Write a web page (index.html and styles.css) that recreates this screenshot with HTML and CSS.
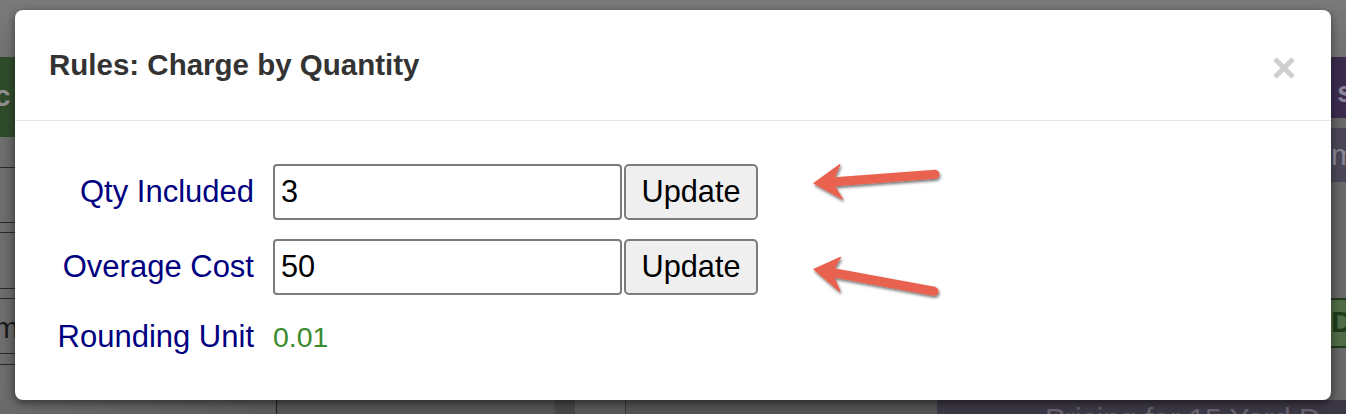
FILE: index.html
```html
<!DOCTYPE html>
<html lang="en">
<head>
<meta charset="utf-8">
<title>Rules: Charge by Quantity</title>
<link rel="stylesheet" href="styles.css">
</head>
<body>
<div class="page">
  <div class="page-top"></div>
  <div class="side side-left">
    <div class="bg-btn bg-green"><span class="bg-text">c</span></div>
    <div class="bg-row r31"></div>
    <div class="bg-row r55"></div>
    <div class="bg-row r10"></div>
    <div class="bg-row r56"></div>
    <div class="bg-row r10"></div>
    <div class="bg-row r55"><span class="bg-text m">m</span></div>
    <div class="bg-row r11"></div>
  </div>
  <div class="center"></div>
  <div class="side side-right">
    <div class="bg-btn bg-purple"><span class="bg-text s">s</span></div>
    <div class="bg-gap g10"></div>
    <div class="bg-box bg-slate"><span class="bg-text m2">m</span></div>
    <div class="bg-gap g116"></div>
    <div class="bg-box bg-lgreen"><span class="bg-d">D</span></div>
  </div>
  <div class="page-bottom">
    <div class="seg seg1"></div>
    <div class="seg seg2"></div>
    <div class="seg seg3"></div>
    <div class="seg seg4"></div>
    <div class="seg seg5"></div>
    <div class="seg seg6"><span class="bg-caption">Pricing for 15 Yard D</span></div>
  </div>
</div>

<div class="modal">
  <div class="modal-header">
    <h4 class="modal-title">Rules: Charge by Quantity</h4>
    <svg class="close" width="22" height="22" viewBox="0 0 22 22" aria-label="Close">
      <path d="M2 2 L20 20 M20 2 L2 20" stroke="#cfcfcf" stroke-width="5.2" fill="none"/>
    </svg>
  </div>
  <div class="modal-body">
    <div class="row">
      <label class="label">Qty Included</label>
      <div class="control">
        <input class="field" type="text" value="3">
        <button class="btn" type="button">Update</button>
      </div>
    </div>
    <div class="row">
      <label class="label">Overage Cost</label>
      <div class="control">
        <input class="field" type="text" value="50">
        <button class="btn" type="button">Update</button>
      </div>
    </div>
    <div class="row row-static">
      <span class="label">Rounding Unit</span>
      <span class="value">0.01</span>
    </div>
  </div>
</div>

<svg class="annotations" width="1346" height="414" viewBox="0 0 1346 414">
  <defs>
    <filter id="sh" x="-20%" y="-40%" width="140%" height="180%">
      <feDropShadow dx="1" dy="2" stdDeviation="1.6" flood-color="#000" flood-opacity="0.55"/>
    </filter>
  </defs>
  <g filter="url(#sh)" fill="#e9624f" stroke="#e9624f">
    <line x1="828" y1="182.3" x2="935" y2="174.3" stroke-width="9" stroke-linecap="round"/>
    <polygon points="814,183.3 840,164.5 832,182 842.5,199" stroke-width="1.2" stroke-linejoin="round"/>
    <line x1="828" y1="271.8" x2="934" y2="291.3" stroke-width="9" stroke-linecap="round"/>
    <polygon points="814,269.3 840.5,257.3 831.7,272.4 840,291.5" stroke-width="1.2" stroke-linejoin="round"/>
  </g>
</svg>
</body>
</html>
```

FILE: styles.css
```css
html, body {
  margin: 0;
  padding: 0;
}

body {
  width: 1346px;
  height: 414px;
  overflow: hidden;
  position: relative;
  font-family: "Liberation Sans", Arial, Helvetica, sans-serif;
  background: #6b6b6b;
}

/* ---------- dimmed page behind the modal ---------- */
.page {
  display: grid;
  grid-template-columns: 15px 1fr 15px;
  grid-template-rows: 57px 1fr 14px;
  height: 414px;
}

.page-top {
  grid-column: 1 / 4;
  background: linear-gradient(#7a7a7a, #707070);
}

.side {
  display: flex;
  flex-direction: column;
  overflow: hidden;
  background: linear-gradient(90deg, #6e6e6e, #646464);
}

.side-right {
  background: linear-gradient(90deg, #5f5f5f, #6a6a6a);
}

.center {
  background: #6b6b6b;
}

.bg-btn {
  flex: none;
  overflow: hidden;
}

.bg-green {
  height: 80px;
  background: #2f4a2b;
}

.bg-purple {
  height: 61px;
  background: #3a2a4d;
}

.bg-text {
  font-family: "Liberation Sans", Arial, sans-serif;
  font-weight: bold;
  color: #8f8f8f;
  font-size: 30px;
  line-height: 1;
  display: block;
}

.bg-green .bg-text {
  margin: 24px 0 0 -6px;
}

.bg-purple .bg-text {
  margin: 20px 0 0 6px;
  color: #8a8296;
}

.bg-row {
  flex: none;
  border-bottom: 1px solid #2a2a2a;
  box-sizing: border-box;
  overflow: hidden;
}

.r31 { height: 31px; }
.r55 { height: 55px; }
.r10 { height: 10px; }
.r56 { height: 56px; }
.r11 { height: 11px; }

.bg-text.m {
  font-weight: normal;
  color: #1a1a1a;
  margin: 14px 0 0 -6px;
}

.bg-gap { flex: none; }
.g10 { height: 10px; }
.g116 { height: 116px; }

.bg-box {
  flex: none;
  box-sizing: border-box;
  overflow: hidden;
}

.bg-slate {
  height: 54px;
  background: #4a4656;
}

.bg-text.m2 {
  font-weight: normal;
  color: #8a8794;
  margin: 12px 0 0 0;
}

.bg-lgreen {
  height: 50px;
  background: #4e6a46;
  border-top: 2px solid #203a1c;
  border-bottom: 2px solid #203a1c;
  padding: 7px 0 0 0;
}

.bg-d {
  display: block;
  font-size: 30px;
  line-height: 1;
  font-weight: bold;
  color: #1e3a1a;
}

.page-bottom {
  grid-column: 1 / 4;
  display: flex;
  overflow: hidden;
}

.seg { height: 14px; }
.seg1 { width: 276px; background: linear-gradient(90deg, #6a6a6a, #5a5a5a); border-right: 1px solid #1f1f1f; }
.seg2 { width: 278px; background: #545454; }
.seg3 { width: 20px; background: #474747; }
.seg4 { width: 50px; background: #575757; border-right: 1px solid #3a3a3a; }
.seg5 { width: 311px; background: #525252; }
.seg6 { flex: 1; background: #3c3745; overflow: hidden; }

.bg-caption {
  display: block;
  margin: 4px 0 0 108px;
  font-size: 30px;
  line-height: 1;
  color: #67636f;
  white-space: nowrap;
}

/* ---------- modal ---------- */
.modal {
  position: absolute;
  left: 15px;
  top: 10px;
  width: 1316px;
  height: 390px;
  background: #fff;
  border-radius: 8px;
  box-shadow: 0 3px 9px rgba(0, 0, 0, 0.5);
}

.modal-header {
  box-sizing: border-box;
  height: 111px;
  border-bottom: 1px solid #e5e5e5;
  padding: 38px 36px 0 34px;
  display: flex;
  justify-content: space-between;
  align-items: flex-start;
}

.modal-title {
  margin: 0;
  font-size: 29.5px;
  line-height: 34px;
  font-weight: bold;
  color: #333;
}

.close {
  margin-top: 9px;
  display: block;
}

.modal-body {
  padding-top: 43px;
  display: flex;
  flex-direction: column;
  gap: 19px;
}

.row {
  display: flex;
  align-items: center;
  gap: 19px;
  height: 56px;
}

.label {
  width: 239px;
  flex: none;
  text-align: right;
  color: #000080;
  font-size: 31px;
}

.control {
  display: flex;
  gap: 2px;
  height: 56px;
}

.field {
  box-sizing: border-box;
  width: 349px;
  height: 56px;
  margin: 0;
  padding: 0 6px;
  border: 2px solid #7c7c7c;
  border-radius: 4px;
  background: #fff;
  color: #000;
  font-family: "Liberation Sans", Arial, sans-serif;
  font-size: 30.7px;
  outline: none;
}

.btn {
  box-sizing: border-box;
  width: 134px;
  height: 56px;
  margin: 0;
  padding: 0;
  border: 2px solid #7c7c7c;
  border-radius: 5px;
  background: #efefef;
  color: #000;
  font-family: "Liberation Sans", Arial, sans-serif;
  font-size: 30.7px;
}

.row-static {
  height: auto;
  margin-top: 5px;
  align-items: baseline;
}

.value {
  color: #3b8a2c;
  font-size: 28.5px;
}

/* ---------- annotation arrows ---------- */
.annotations {
  position: absolute;
  left: 0;
  top: 0;
  pointer-events: none;
}
```
